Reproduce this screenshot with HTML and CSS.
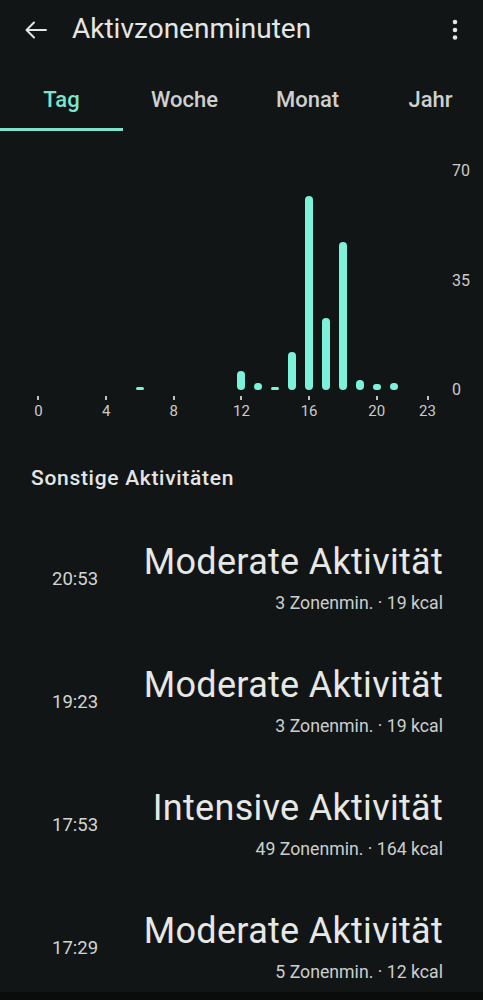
FILE: index.html
```html
<!DOCTYPE html>
<html>
<head>
    <title>Aktivzonenminuten</title>
    <link rel="stylesheet" href="styles.css">
</head>
<body>
    <header class="appbar">
        <svg class="back" viewBox="0 0 22 18" width="22" height="18">
            <path d="M21 9H2M9 1.5L1.5 9L9 16.5" fill="none" stroke="#e4e6e5" stroke-width="2" stroke-linecap="round" stroke-linejoin="round"/>
        </svg>
        <h1 class="title">Aktivzonenminuten</h1>
        <svg class="more" viewBox="0 0 6 22" width="6" height="22">
            <circle cx="3" cy="3" r="2.3" fill="#e4e6e5"/>
            <circle cx="3" cy="11" r="2.3" fill="#e4e6e5"/>
            <circle cx="3" cy="18.5" r="2.3" fill="#e4e6e5"/>
        </svg>
    </header>

    <nav class="tabs">
        <div class="tab active">Tag</div>
        <div class="tab">Woche</div>
        <div class="tab">Monat</div>
        <div class="tab">Jahr</div>
    </nav>

    <section class="chart">
        <div class="plot">
            <div class="bars">
                <!-- one column per hour, 3.13px per minute -->
                <div class="col"></div>
                <div class="col"></div>
                <div class="col"></div>
                <div class="col"></div>
                <div class="col"></div>
                <div class="col"></div>
                <div class="col"><div class="bar" style="height: 3px"></div></div>
                <div class="col"></div>
                <div class="col"></div>
                <div class="col"></div>
                <div class="col"></div>
                <div class="col"></div>
                <div class="col"><div class="bar" style="height: 19px"></div></div>
                <div class="col"><div class="bar" style="height: 7px"></div></div>
                <div class="col"><div class="bar" style="height: 3px"></div></div>
                <div class="col"><div class="bar" style="height: 38px"></div></div>
                <div class="col"><div class="bar" style="height: 194px"></div></div>
                <div class="col"><div class="bar" style="height: 72px"></div></div>
                <div class="col"><div class="bar" style="height: 148px"></div></div>
                <div class="col"><div class="bar" style="height: 10px"></div></div>
                <div class="col"><div class="bar" style="height: 6px"></div></div>
                <div class="col"><div class="bar" style="height: 7px"></div></div>
                <div class="col"></div>
                <div class="col"></div>
            </div>
            <div class="axis-y">
                <span>70</span>
                <span>35</span>
                <span>0</span>
            </div>
        </div>
        <div class="axis-x">
            <div class="hour"><i></i><span>0</span></div>
            <div class="hour"></div>
            <div class="hour"></div>
            <div class="hour"></div>
            <div class="hour"><i></i><span>4</span></div>
            <div class="hour"></div>
            <div class="hour"></div>
            <div class="hour"></div>
            <div class="hour"><i></i><span>8</span></div>
            <div class="hour"></div>
            <div class="hour"></div>
            <div class="hour"></div>
            <div class="hour"><i></i><span>12</span></div>
            <div class="hour"></div>
            <div class="hour"></div>
            <div class="hour"></div>
            <div class="hour"><i></i><span>16</span></div>
            <div class="hour"></div>
            <div class="hour"></div>
            <div class="hour"></div>
            <div class="hour"><i></i><span>20</span></div>
            <div class="hour"></div>
            <div class="hour"></div>
            <div class="hour"><i></i><span>23</span></div>
        </div>
    </section>

    <h2 class="section-title">Sonstige Aktivitäten</h2>

    <ul class="activities">
        <li class="activity">
            <span class="time">20:53</span>
            <div class="info">
                <div class="name">Moderate Aktivität</div>
                <div class="meta">3 Zonenmin. · 19 kcal</div>
            </div>
        </li>
        <li class="activity">
            <span class="time">19:23</span>
            <div class="info">
                <div class="name">Moderate Aktivität</div>
                <div class="meta">3 Zonenmin. · 19 kcal</div>
            </div>
        </li>
        <li class="activity">
            <span class="time">17:53</span>
            <div class="info">
                <div class="name">Intensive Aktivität</div>
                <div class="meta">49 Zonenmin. · 164 kcal</div>
            </div>
        </li>
        <li class="activity">
            <span class="time">17:29</span>
            <div class="info">
                <div class="name">Moderate Aktivität</div>
                <div class="meta">5 Zonenmin. · 12 kcal</div>
            </div>
        </li>
    </ul>

    <div class="navbar"></div>
</body>
</html>
```

FILE: styles.css
```css
body {
    margin: 0;
    height: 1000px;
    display: flex;
    flex-direction: column;
    overflow: hidden;
    background-color: #121515;
    color: #e4e6e5;
    font-family: Roboto, "Open Sans", sans-serif;
}

.appbar {
    height: 58px;
    display: flex;
    align-items: center;
    padding: 0 25px;
}

.back {
    flex: none;
    margin-top: 1px;
}

.title {
    flex: 1;
    margin: 0 0 0 25px;
    font-size: 28px;
    line-height: 32px;
    font-weight: 400;
}

.more {
    flex: none;
    margin-top: 1px;
}

.tabs {
    display: flex;
    height: 73px;
    overflow: hidden;
}

.tab {
    flex: none;
    width: 123px;
    display: flex;
    align-items: center;
    justify-content: center;
    font-size: 22px;
    font-weight: 500;
    color: #cdd0cf;
    box-sizing: border-box;
    padding-top: 12px;
    border-bottom: 3px solid transparent;
}

.tab.active {
    color: #7de3cc;
    border-bottom-color: #7de3cc;
}

.chart {
    padding: 40px 0 0 30px;
}

.plot {
    display: flex;
    align-items: stretch;
}

.bars {
    width: 406px;
    height: 219px;
    display: grid;
    grid-template-columns: repeat(24, 1fr);
}

.col {
    display: flex;
    align-items: flex-end;
    justify-content: center;
}

.bar {
    width: 8px;
    border-radius: 4px;
    background-color: #7cf2da;
}

.axis-y {
    display: flex;
    flex-direction: column;
    justify-content: space-between;
    margin: -8px 0 -8px 16px;
    font-size: 16px;
    line-height: 16px;
    color: #c9cccb;
}

.axis-x {
    width: 406px;
    display: grid;
    grid-template-columns: repeat(24, 1fr);
    margin-top: 6px;
}

.hour {
    display: flex;
    flex-direction: column;
    align-items: center;
    height: 28px;
}

.hour i {
    width: 2px;
    height: 4px;
    background-color: #bfc2c1;
}

.hour span {
    margin-top: 4px;
    font-size: 15px;
    line-height: 14px;
    color: #c9cccb;
}

.section-title {
    margin: 41px 0 0 31px;
    font-size: 21px;
    line-height: 26px;
    font-weight: 500;
    letter-spacing: 0.7px;
    color: #e4e6e5;
}

.activities {
    flex: 1;
    list-style: none;
    margin: 0;
    padding: 49px 40px 0 52px;
    display: flex;
    flex-direction: column;
    gap: 49px;
}

.activity {
    display: flex;
    align-items: center;
    justify-content: space-between;
}

.time {
    font-size: 18.5px;
    line-height: 22px;
    color: #d2d4d3;
    padding-top: 3px;
}

.info {
    text-align: right;
}

.name {
    font-size: 36px;
    line-height: 44px;
    letter-spacing: 0.3px;
    color: #e6e8e7;
}

.meta {
    margin-top: 8px;
    font-size: 17.7px;
    line-height: 22px;
    color: #cbcecd;
}

.navbar {
    flex: none;
    height: 8px;
    background-color: #0a0c0c;
}
```
